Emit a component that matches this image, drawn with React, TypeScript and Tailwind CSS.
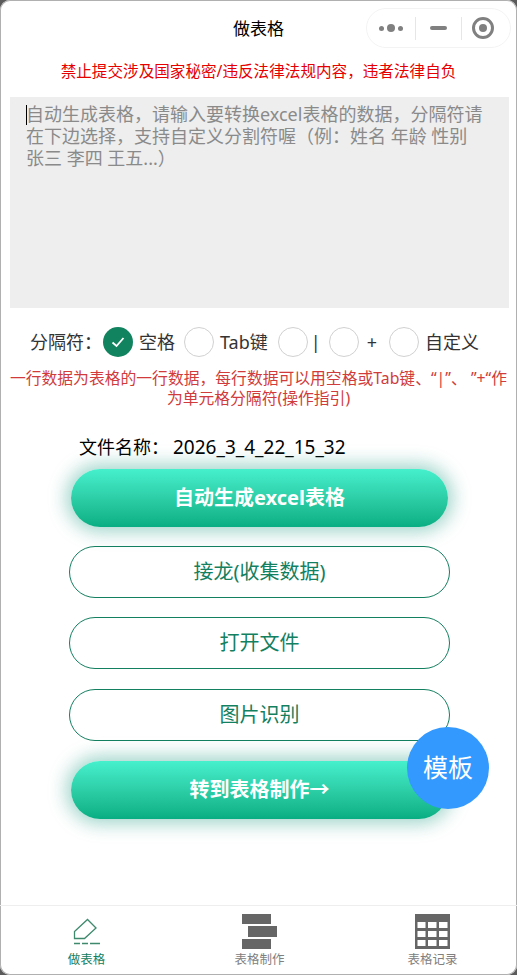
import React from 'react';

const cjk = '"Noto Sans", "Noto Sans CJK SC", sans-serif';

const separators = [
    { label: '空格', checked: true, gap: 'ml-[6px] mr-[9px]' },
    { label: 'Tab键', checked: false, gap: 'ml-[6px] mr-[10px]' },
    { label: '|', checked: false, gap: 'ml-[3px] mr-[8px]' },
    { label: '+', checked: false, gap: 'ml-[8px] mr-[12px]' },
    { label: '自定义', checked: false, gap: 'ml-[6px]' },
];

const GreenButton = ({ label, className }: { label: string; className: string }) => (
    <button className={`mx-auto flex h-[58px] w-[377px] shrink-0 translate-x-[1px] items-center justify-center rounded-full bg-gradient-to-b from-[#46f0cd] to-[#07ae82] text-[20px] font-bold text-white shadow-[0_0_18px_5px_rgba(20,150,125,0.4)] ${className}`}>
        {label}
    </button>
);

const OutlineButton = ({ label, className }: { label: string; className: string }) => (
    <button className={`mx-auto flex h-[52px] w-[381px] shrink-0 translate-x-[1px] items-center justify-center rounded-full border border-[#13805f] text-[20px] text-[#13805f] ${className}`}>
        {label}
    </button>
);

export default function App() {
    return (
        <div className="h-[975px] w-[517px] overflow-hidden bg-[#5b5b5b]" style={{ fontFamily: cjk }}>
            <div className="relative flex h-[975px] w-[517px] flex-col overflow-hidden rounded-[10px] bg-white shadow-[inset_0_0_0_1px_#b0b0b0]">
                {/* title bar */}
                <div className="relative flex h-[57px] shrink-0 items-center justify-center">
                    <span className="text-[17px] text-black">做表格</span>
                    <div className="absolute right-[6px] top-[8px] flex h-[40px] w-[145px] items-center rounded-full border border-[#f3f3f3]">
                        <div className="flex w-[48px] items-center justify-center gap-[3px]">
                            <span className="h-[5px] w-[5px] rounded-full bg-[#808080]" />
                            <span className="h-[8px] w-[8px] rounded-full bg-[#808080]" />
                            <span className="h-[5px] w-[5px] rounded-full bg-[#808080]" />
                        </div>
                        <div className="h-[23px] w-px bg-[#e6e6e6]" />
                        <div className="flex w-[45px] items-center justify-center">
                            <span className="h-[4px] w-[17px] rounded-full bg-[#808080]" />
                        </div>
                        <div className="h-[23px] w-px bg-[#e6e6e6]" />
                        <div className="flex flex-1 -translate-x-[3px] items-center justify-center">
                            <span className="flex h-[22px] w-[22px] items-center justify-center rounded-full border-[3px] border-[#808080]">
                                <span className="h-[8px] w-[8px] rounded-full bg-[#808080]" />
                            </span>
                        </div>
                    </div>
                </div>

                <p className="mt-[3px] text-center text-[15.6px] leading-[22px] text-[#e60000]">禁止提交涉及国家秘密/违反法律法规内容，违者法律自负</p>

                {/* data input */}
                <div className="ml-[10px] mr-[8px] mt-[15px] h-[211px] shrink-0 bg-[#eeeeee] pl-[16px] pr-[24px] pt-[6px] text-[18px] leading-[22px] text-[#8a8a8a]">
                    <div className="relative">
                        <span className="absolute left-0 top-[2px] h-[20px] w-px bg-black" />
                        自动生成表格，请输入要转换excel表格的数据，分隔符请在下边选择，支持自定义分割符喔（例：姓名 年龄 性别 张三 李四 王五...）
                    </div>
                </div>

                {/* separators */}
                <div className="mt-[19px] flex h-[30px] shrink-0 items-center pl-[30px] text-[18px] text-[#333333]">
                    <span className="mr-[1px]">分隔符：</span>
                    {separators.map(item => (
                        <div key={item.label} className="flex items-center">
                            {item.checked ? (
                                <span className="flex h-[30px] w-[30px] items-center justify-center rounded-full bg-[#12835f]">
                                    <svg width="14" height="12" viewBox="0 0 14 12" fill="none" stroke="white" strokeWidth="1.8">
                                        <path d="M1.5 6.5 L5.5 10 L12.5 2" />
                                    </svg>
                                </span>
                            ) : (
                                <span className="h-[30px] w-[30px] rounded-full border border-[#d1d1d1]" />
                            )}
                            <span className={item.gap}>{item.label}</span>
                        </div>
                    ))}
                </div>

                <p className="mt-[11px] px-[8px] text-center text-[15.8px] leading-[20px] text-[#d13b3b]">一行数据为表格的一行数据，每行数据可以用空格或Tab键、“|”、 ”+“作为单元格分隔符(操作指引)</p>

                <div className="mt-[26px] flex h-[26px] shrink-0 items-center pl-[79px] text-[18px] text-black">
                    <span className="mr-[4px]">文件名称：</span>
                    <span className="text-[19px]">2026_3_4_22_15_32</span>
                </div>

                <GreenButton label="自动生成excel表格" className="mt-[9px]" />
                <OutlineButton label="接龙(收集数据)" className="mt-[19px]" />
                <OutlineButton label="打开文件" className="mt-[19px]" />
                <OutlineButton label="图片识别" className="mt-[20px]" />
                <GreenButton label="转到表格制作→" className="mt-[20px]" />

                {/* floating template button */}
                <div className="absolute left-[407px] top-[727px] flex h-[82px] w-[82px] items-center justify-center rounded-full bg-[#3399ff] text-[25px] text-white">模板</div>

                {/* tab bar */}
                <div className="-mr-[2px] mt-auto flex h-[70px] shrink-0 border-t border-[#eeeeee] text-[12.5px]">
                    <div className="flex flex-1 flex-col items-center text-[#13805f]">
                        <svg className="mt-[12px]" width="28" height="27" viewBox="0 0 28 27" fill="none" stroke="#3f8a6e" strokeWidth="1.3">
                            <path d="M1.5 20.5 V13.5 L14.5 1.5 L23 10 L11.5 20.5 Z" />
                            <path d="M1 25.5 H7 M9 25.5 H15 M17 25.5 H27" strokeWidth="1.6" />
                        </svg>
                        <span className="mt-[6px]">做表格</span>
                    </div>
                    <div className="flex flex-1 flex-col items-center text-[#808080]">
                        <svg className="mt-[8px]" width="35" height="35" viewBox="0 0 35 35" fill="#666666">
                            <rect x="0" y="0" width="29" height="10" />
                            <rect x="6" y="12" width="29" height="11" />
                            <rect x="0" y="25" width="29" height="10" />
                        </svg>
                        <span className="mt-[2px]">表格制作</span>
                    </div>
                    <div className="flex flex-1 flex-col items-center text-[#808080]">
                        <svg className="mt-[8px]" width="35" height="35" viewBox="0 0 35 35" fill="#666666" fillRule="evenodd">
                            <path d="M0 0H35V35H0Z M2.5 8V14H10.5V8Z M13 8V14H21.5V8Z M24 8V14H32.5V8Z M2.5 17V23H10.5V17Z M13 17V23H21.5V17Z M24 17V23H32.5V17Z M2.5 26V32H10.5V26Z M13 26V32H21.5V26Z M24 26V32H32.5V26Z" />
                        </svg>
                        <span className="mt-[2px]">表格记录</span>
                    </div>
                </div>
            </div>
        </div>
    );
}
